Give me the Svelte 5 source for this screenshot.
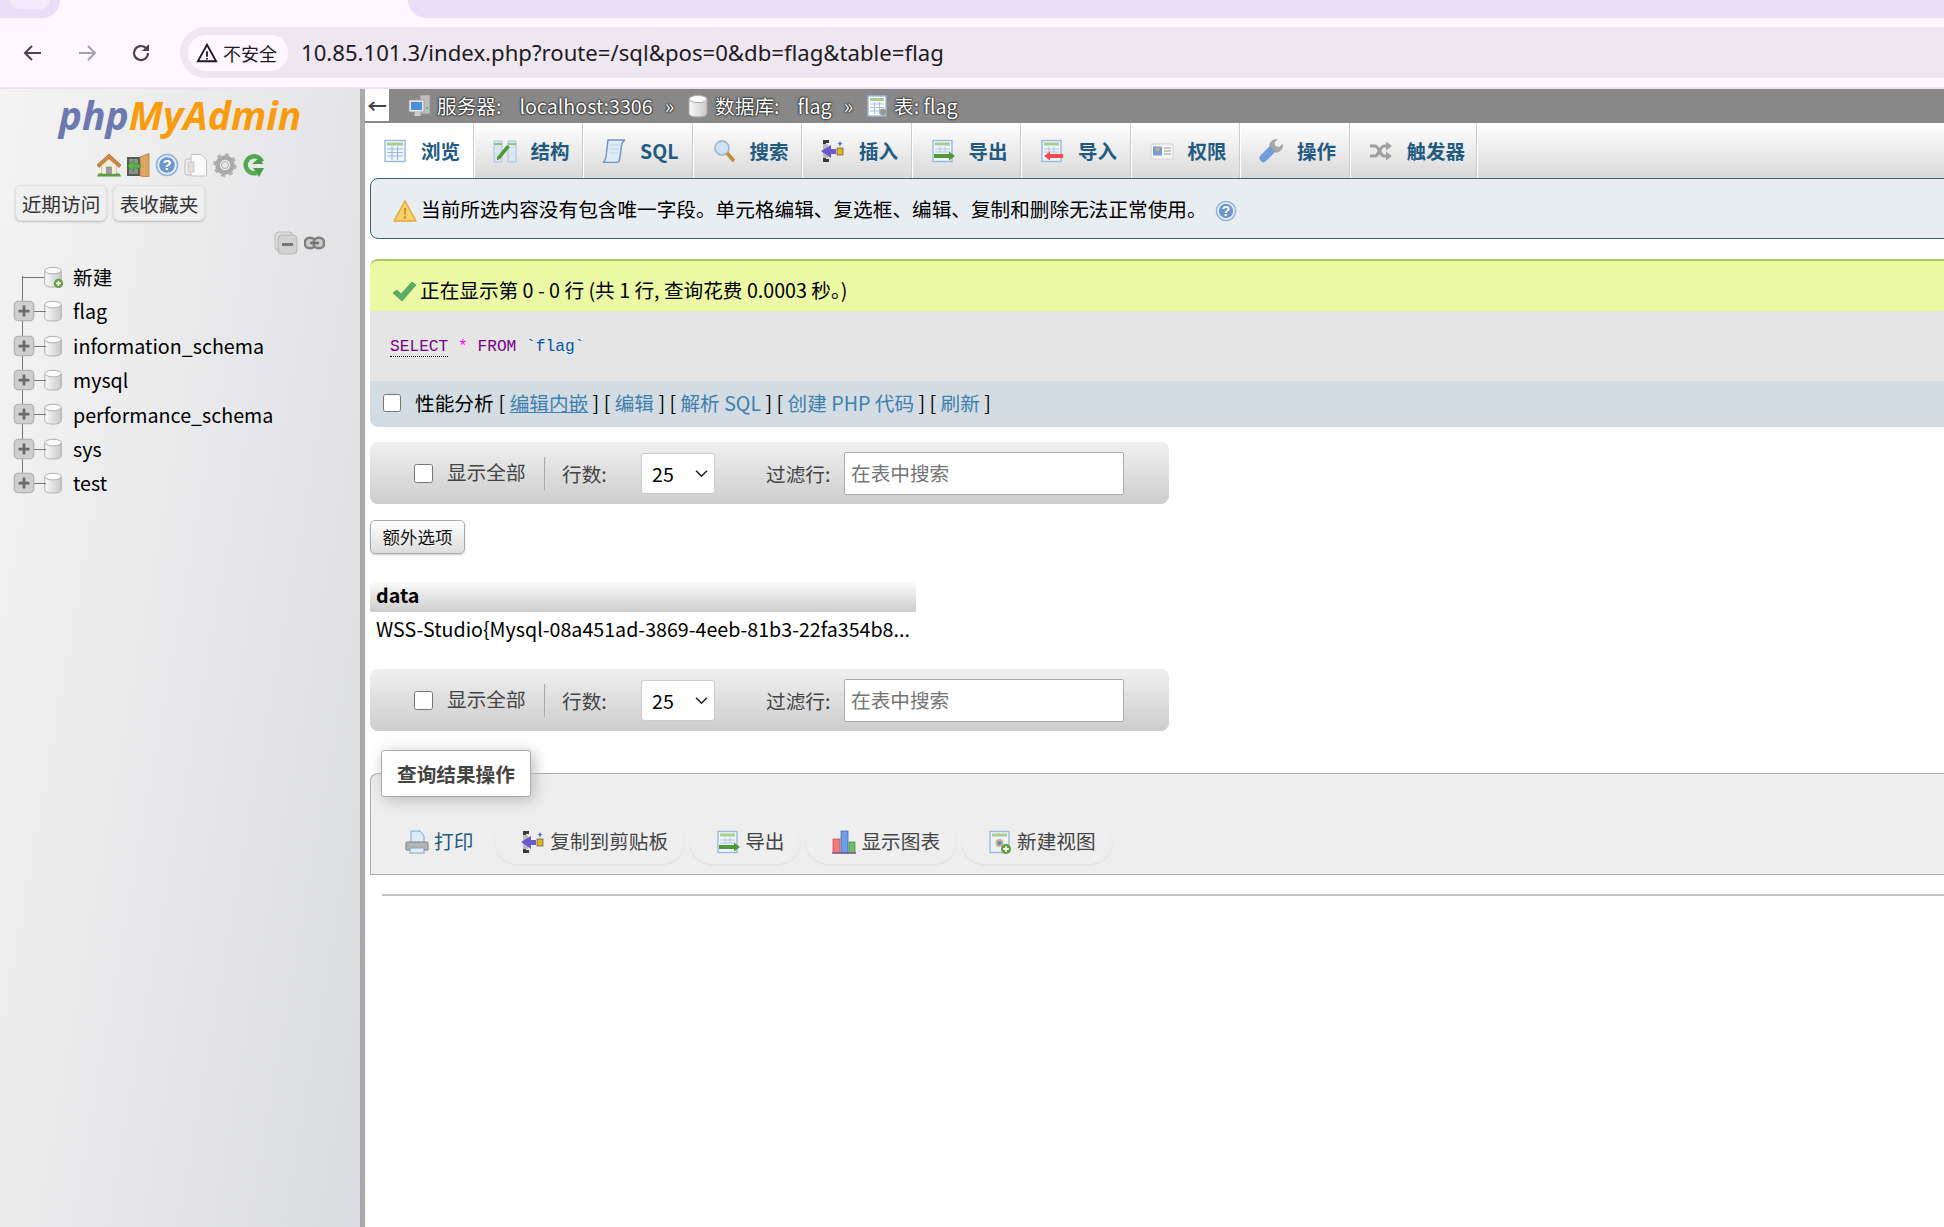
<script>
	const tabs = [
		{ label: '浏览', icon: 'browse', active: true },
		{ label: '结构', icon: 'structure' },
		{ label: 'SQL', icon: 'sql' },
		{ label: '搜索', icon: 'search' },
		{ label: '插入', icon: 'insert' },
		{ label: '导出', icon: 'export' },
		{ label: '导入', icon: 'import' },
		{ label: '权限', icon: 'privs' },
		{ label: '操作', icon: 'wrench' },
		{ label: '触发器', icon: 'triggers' }
	];

	const databases = ['flag', 'information_schema', 'mysql', 'performance_schema', 'sys', 'test'];

	const actions = [
		{ label: '复制到剪贴板', icon: 'insert' },
		{ label: '导出', icon: 'export' },
		{ label: '显示图表', icon: 'chart' },
		{ label: '新建视图', icon: 'view' }
	];
</script>

{#snippet icon(name)}
	<svg class="ic" viewBox="0 0 24 24" aria-hidden="true">
		{#if name === 'home'}
			<path d="M12 1 0 12l2 2.500 10-9 10 9 2-2.500z" fill="#d2873c" stroke="#8a5a2a" stroke-width=".6" />
			<path d="M4.500 12.500 12 6l7.500 6.500V21h-15z" fill="#f5ecd9" stroke="#b9a98c" stroke-width=".6" />
			<rect x="9.500" y="14" width="5" height="7" fill="#9a9a9a" stroke="#777" stroke-width=".5" />
			<path d="M0 23.500c1-3.500 3-4 6-2.500h12c3-1.500 5-1 6 2.500z" fill="#5d9c3c" />
		{:else if name === 'exit'}
			<rect x="1" y="4" width="13" height="19" fill="#565b54" />
			<rect x="3" y="6" width="9" height="15" fill="#8d938a" />
			<path d="M14 4 23 .5V24l-9-1z" fill="#dba662" stroke="#a8722f" stroke-width=".7" />
			<path d="M1 13l7-5.500V11h6v4H8v3.500z" fill="#58b546" stroke="#2f7a26" stroke-width=".6" />
		{:else if name === 'help'}
			<circle cx="12" cy="12" r="10.500" fill="#e3ecf7" stroke="#8fb0d9" stroke-width="1.500" />
			<circle cx="12" cy="12" r="7.800" fill="#6c96cd" />
			<text x="12" y="17" class="q">?</text>
		{:else if name === 'docs'}
			<rect x="1" y="6" width="13" height="16" rx="2" fill="#eee" stroke="#bbb" />
			<path d="M7 1.500h10l5.500 5.500v16H7z" fill="#fafafa" stroke="#c4c4c4" />
			<rect x="4" y="9" width="6" height="10" fill="#ddd" stroke="#bbb" stroke-width=".6" />
		{:else if name === 'gear'}
			<circle cx="12" cy="12" r="7.500" fill="none" stroke="#a9a9a9" stroke-width="4.500" />
			<circle cx="12" cy="12" r="10" fill="none" stroke="#b0b0b0" stroke-width="3.500" stroke-dasharray="3.800 4" />
			<circle cx="12" cy="12" r="3.500" fill="#e9e9e9" stroke="#999" stroke-width=".7" />
		{:else if name === 'reload'}
			<path d="M20 8.500A8.500 8.500 0 1 0 14.500 20" fill="none" stroke="#55a850" stroke-width="4.500" />
			<circle cx="11.500" cy="12" r="2.500" fill="#d9eed7" />
			<path d="M10 11h11l-3-7zM11 15l6 9 5-9z" fill="#4a9e46" />
		{:else if name === 'db' || name === 'dbnew'}
			<path d="M3 5v14c0 3 4 4 9 4s9-1 9-4V5z" fill="url(#dbg)" stroke="#a9a9a9" />
			<ellipse cx="12" cy="5" rx="9" ry="3.600" fill="#fbfbfb" stroke="#a9a9a9" />
			{#if name === 'dbnew'}
				<circle cx="18" cy="19" r="5" fill="#5f9e3f" />
				<path d="M18 16.200v5.600M15.200 19h5.600" stroke="#fff" stroke-width="1.800" />
			{/if}
		{:else if name === 'plus'}
			<rect x="1.500" y="1.500" width="21" height="21" rx="4" fill="#cfcfcf" stroke="#b4b4b4" stroke-width="1.500" />
			<path d="M12 6v12M6 12h12" stroke="#6b6b6b" stroke-width="3" />
		{:else if name === 'collapse'}
			<rect x="1" y="1" width="18" height="19" rx="4" fill="#dedede" stroke="#bbb" />
			<rect x="4" y="4" width="19" height="19" rx="4" fill="#d2d2d2" stroke="#b4b4b4" />
			<rect x="8" y="12" width="11" height="3" fill="#777" />
		{:else if name === 'link'}
			<rect x="1" y="6" width="12" height="12" rx="5.500" fill="#ccc" stroke="#808080" stroke-width="3" />
			<rect x="11" y="6" width="12" height="12" rx="5.500" fill="#ccc" stroke="#808080" stroke-width="3" />
			<rect x="7" y="10.500" width="10" height="3" fill="#707070" />
		{:else if name === 'server'}
			<rect x="12" y="1" width="10" height="19" fill="#bdbdbd" stroke="#8d8d8d" stroke-width=".7" />
			<rect x="1" y="6" width="15" height="12" fill="#e7e7e7" stroke="#999" stroke-width=".8" />
			<rect x="3" y="8" width="11" height="8" fill="#4b8fd6" />
			<path d="M6 22h7l-1-4H7z" fill="#ccc" />
			<circle cx="19" cy="14" r="1" fill="#4caf50" />
		{:else if name === 'table'}
			<rect x="3" y="2" width="18" height="20" fill="#fff" stroke="#9db8dd" stroke-width="1.400" />
			<rect x="5" y="4" width="14" height="3" fill="#a5cf8f" />
			<path d="M5 10h14M5 13.500h14M5 17h14M9.500 8v12M14.500 8v12" stroke="#a9c0e2" stroke-width="1.200" />
			<circle cx="18" cy="18" r="3.500" fill="#9a9a9a" />
		{:else if name === 'browse'}
			<rect x="2" y="1.500" width="20" height="21" fill="#f3f7fd" stroke="#9db8dd" stroke-width="1.400" />
			<rect x="4" y="3.500" width="16" height="3" fill="#a5cf8f" />
			<path d="M4 10h16M4 13.500h16M4 17h16M9 7.500V21M14.500 7.500V21" stroke="#9db8dd" stroke-width="1.200" />
		{:else if name === 'structure'}
			<path d="M1 2h8v21H1zM15 2h8v21h-8z" fill="#dbe6f5" stroke="#a9c0e2" />
			<path d="M1 5h8M15 5h8" stroke="#8fc07a" stroke-width="2" />
			<path d="M4 21l3-1 10-12-3-2-10 12z" fill="#4f9a35" />
		{:else if name === 'sql'}
			<path d="M6 1h17c-2 1-3 3-3.500 6l-2 14c-.3 2-2 2.500-3 2.500H1c2-1 2.500-3 3-6z" fill="#dfeafa" stroke="#6f96c9" stroke-width="1.500" />
			<path d="M8 6h10M7.500 10h9.500M7 14h9" stroke="#bcd0ea" />
		{:else if name === 'search'}
			<circle cx="10" cy="9" r="7" fill="#cfe2f5" stroke="#a9b8c7" stroke-width="1.800" />
			<path d="M15 14l7 8" stroke="#c08b3d" stroke-width="3.500" />
		{:else if name === 'insert'}
			<path d="M2 1h6v3H5v16h3v3H2z" fill="#3a3a3a" />
			<rect x="2" y="5" width="5" height="14" fill="#bdbdbd" />
			<path d="M0 12l10-6v4h5v5h-5v4z" fill="#6a5acd" />
			<rect x="16" y="9" width="6" height="7" fill="#e3b21c" stroke="#444" stroke-width=".6" />
			<path d="M19 2l1 2 1.500.5-1.500 1-1 2-1-2-1.500-1L18 4z" fill="#5b6fd0" />
		{:else if name === 'export' || name === 'import'}
			<rect x="2" y="1.500" width="19" height="21" fill="#f0f5fb" stroke="#9db8dd" stroke-width="1.400" />
			<rect x="4" y="3.500" width="15" height="3" fill="#a5cf8f" />
			<path d="M4 10h15M4 13h15M9 7.500v6M14 7.500v6" stroke="#b0c5e3" />
			{#if name === 'export'}
				<path d="M3 15h15v-2.500l6 4.500-6 4.500V19H3z" fill="#4f9a35" />
			{:else}
				<path d="M23 15H10v-2.500l-6 4.500 6 4.500V19h13z" fill="#ef4b4b" />
			{/if}
		{:else if name === 'privs'}
			<rect x="1" y="5" width="22" height="15" rx="1" fill="#f7f7f7" stroke="#d2d2d2" />
			<rect x="3" y="7.500" width="9" height="9" fill="#6d9ed6" />
			<circle cx="7.500" cy="10.500" r="2" fill="#e3a96c" />
			<path d="M14 9h7M14 12h7M14 15h7" stroke="#bbb" stroke-width="1.300" />
		{:else if name === 'wrench'}
			<path d="M2.500 22c-2.500-2-1.500-4.500-.5-5.500l10-10 5 5-10 10c-1 1-3 2.500-4.500.5z" fill="#6f9de0" stroke="#4f7cc4" stroke-width=".7" />
			<path d="M11 8c-1-4 2-7.500 7-7.500l-3 3 1 4 4 1 3.500-3c0 5-3.500 8.500-7.500 7.500z" fill="#a8a8a8" stroke="#888" stroke-width=".6" />
		{:else if name === 'triggers'}
			<path d="M1 7h5c4 0 5 10 9 10h3M1 17h5c4 0 5-10 9-10h3" fill="none" stroke="#a0a0a0" stroke-width="3.200" />
			<path d="M17 2.500l6 4.500-6 4.500zM17 12.500l6 4.500-6 4.500z" fill="#a0a0a0" />
		{:else if name === 'warn'}
			<path d="M12 2 1 22h22z" fill="#f7d26a" stroke="#e0a93b" stroke-width="1.500" stroke-linejoin="round" />
			<path d="M11 9h2l-.4 7h-1.200z" fill="#c98a1c" />
			<circle cx="12" cy="18.500" r="1.300" fill="#c98a1c" />
		{:else if name === 'ok'}
			<path d="M1 14l4-3 4 4L20 3l4 3L10 22z" fill="#59ad65" stroke="#3f8a4b" stroke-width=".6" />
		{:else if name === 'print'}
			<path d="M6 1h9l4 5v8H6z" fill="#dfeafa" stroke="#7ea2d0" />
			<path d="M2 12h20c1 0 1 1 1 2v6H1v-6c0-1 0-2 1-2z" fill="#b5b5b5" stroke="#808080" />
			<rect x="5" y="18" width="14" height="5" fill="#e6eef9" stroke="#7ea2d0" />
		{:else if name === 'chart'}
			<rect x="1" y="9" width="7" height="14" fill="#ef7d7d" stroke="#d64545" stroke-width=".7" />
			<rect x="9" y="1" width="7" height="22" fill="#6d9ee6" stroke="#2f62bb" stroke-width=".7" />
			<rect x="17" y="12" width="6" height="11" fill="#74bb6a" stroke="#3c8a35" stroke-width=".7" />
			<path d="M0 23h24" stroke="#7a4a90" stroke-width="1.300" />
		{:else if name === 'view'}
			<rect x="2" y="1.500" width="19" height="21" fill="#eef3fa" stroke="#9db8dd" stroke-width="1.400" />
			<rect x="4" y="3.500" width="15" height="3" fill="#a5cf8f" />
			<circle cx="11.500" cy="13" r="4" fill="#c9b38a" />
			<circle cx="11.500" cy="13" r="2" fill="#5a8cc9" />
			<circle cx="18" cy="19" r="5" fill="#5f9e3f" />
			<path d="M18 16.200v5.600M15.200 19h5.600" stroke="#fff" stroke-width="1.800" />
		{/if}
	</svg>
{/snippet}

{#snippet tableNav()}
	<div class="table-nav">
		<input type="checkbox" class="check" />
		<span class="show-all">显示全部</span>
		<span class="nav-sep"></span>
		<span class="rows-label">行数:</span>
		<span class="select-wrap">
			<select class="rows-select"><option>25</option><option>50</option></select>
			<svg class="chevron" viewBox="0 0 12 8"><path d="M1 1.500 6 6.500l5-5" fill="none" stroke="#222" stroke-width="1.500" /></svg>
		</span>
		<span class="filter-label">过滤行:</span>
		<input class="filter-input" type="text" placeholder="在表中搜索" />
	</div>
{/snippet}

<svg class="defs" width="0" height="0" aria-hidden="true">
	<defs>
		<linearGradient id="dbg" x1="0" x2="1" y1="0" y2="0">
			<stop offset="0" stop-color="#fafafa" />
			<stop offset="1" stop-color="#c8c8c8" />
		</linearGradient>
	</defs>
</svg>

<div class="browser">
	<div class="tabstrip">
		<div class="strip-left"><span class="other-tab"></span></div>
		<div class="strip-active"></div>
		<div class="strip-right"></div>
	</div>
	<div class="toolbar">
		<svg class="nav-btn" viewBox="0 0 24 24"><path d="M20 12H5M11 5l-7 7 7 7" fill="none" stroke="#48454e" stroke-width="2" /></svg>
		<svg class="nav-btn" viewBox="0 0 24 24"><path d="M4 12h15M13 5l7 7-7 7" fill="none" stroke="#a5a1aa" stroke-width="2" /></svg>
		<svg class="nav-btn" viewBox="0 0 24 24"><path d="M19 12a7 7 0 1 1-2.200-5.100L19 9" fill="none" stroke="#48454e" stroke-width="2.200" /><path d="M20 3v7h-7z" fill="#48454e" /></svg>
		<div class="address">
			<div class="security">
				<svg class="warn-tri" viewBox="0 0 24 24"><path d="M12 3 2 21h20z M12 10v6 M12 17.500v1.500" fill="none" stroke="#1d1b20" stroke-width="2" /></svg>
				<span>不安全</span>
			</div>
			<span class="url">10.85.101.3/index.php?route=/sql&amp;pos=0&amp;db=flag&amp;table=flag</span>
		</div>
	</div>
</div>

<div class="page">
	<aside class="sidebar">
		<div class="logo"><span class="php">php</span><span class="mya">MyAdmin</span></div>
		<div class="quick-icons">
			{@render icon('home')}
			{@render icon('exit')}
			{@render icon('help')}
			{@render icon('docs')}
			{@render icon('gear')}
			{@render icon('reload')}
		</div>
		<div class="side-tabs">
			<button type="button">近期访问</button>
			<button type="button">表收藏夹</button>
		</div>
		<div class="tree-tools">
			{@render icon('collapse')}
			{@render icon('link')}
		</div>
		<ul class="tree">
			<li class="new-row">
				<span class="exp"></span>
				{@render icon('dbnew')}
				<span>新建</span>
			</li>
			{#each databases as db}
				<li>
					<span class="exp">{@render icon('plus')}</span>
					{@render icon('db')}
					<span>{db}</span>
				</li>
			{/each}
		</ul>
	</aside>
	<div class="splitter"></div>
	<main class="main">
		<div class="crumbs">
			<span class="back">←</span>
			<span class="crumb first">{@render icon('server')}<span>服务器:</span><span class="val">localhost:3306</span></span>
			<span class="raquo">»</span>
			<span class="crumb">{@render icon('db')}<span>数据库:</span><span class="val">flag</span></span>
			<span class="raquo">»</span>
			<span class="crumb">{@render icon('table')}<span>表: flag</span></span>
		</div>
		<nav class="tabs">
			{#each tabs as tab}
				<a class="tab" class:active={tab.active} href="#top">
					{@render icon(tab.icon)}
					<span>{tab.label}</span>
				</a>
			{/each}
		</nav>
		<div class="content">
			<div class="notice">
				{@render icon('warn')}
				<span>当前所选内容没有包含唯一字段。单元格编辑、复选框、编辑、复制和删除无法正常使用。</span>
				{@render icon('help')}
			</div>
			<div class="result-block">
				<div class="success">
					{@render icon('ok')}
					<span>正在显示第 0 - 0 行 (共 1 行, 查询花费 0.0003 秒。)</span>
				</div>
				<div class="sql-box">
					<code><span class="kw dotted">SELECT</span> <span class="star">*</span> <span class="kw">FROM</span> <span class="name">`flag`</span></code>
				</div>
				<div class="profiling">
					<input type="checkbox" class="check" />
					<span class="prof-label">性能分析</span>
					<span>[ <a class="under" href="#top">编辑内嵌</a> ] [ <a href="#top">编辑</a> ] [ <a href="#top">解析 SQL</a> ] [ <a href="#top">创建 PHP 代码</a> ] [ <a href="#top">刷新</a> ]</span>
				</div>
			</div>

			{@render tableNav()}

			<button class="extra" type="button">额外选项</button>

			<table class="data">
				<thead><tr><th>data</th></tr></thead>
				<tbody><tr><td>WSS-Studio{'{'}Mysql-08a451ad-3869-4eeb-81b3-22fa354b8...</td></tr></tbody>
			</table>

			{@render tableNav()}

			<fieldset class="ops">
				<legend>查询结果操作</legend>
				<div class="ops-row">
					<a class="op plain" href="#top">{@render icon('print')}<span>打印</span></a>
					{#each actions as a}
						<a class="op" href="#top">{@render icon(a.icon)}<span>{a.label}</span></a>
					{/each}
				</div>
			</fieldset>
			<hr class="rule" />
		</div>
	</main>
</div>

<style>
	:global(body) {
		margin: 0;
		background: #fff;
		font-family: 'Noto Sans CJK SC', 'Noto Sans', sans-serif;
		font-size: 19.65px;
		color: #000;
		overflow: hidden;
	}

	.defs {
		position: absolute;
	}

	.ic {
		width: 24px;
		height: 24px;
		flex: none;
		display: block;
	}

	.q {
		fill: #fff;
		font: bold 15px 'Liberation Sans', sans-serif;
		text-anchor: middle;
	}

	/* browser chrome */
	.browser {
		height: 89px;
		box-sizing: border-box;
		border-bottom: 2px solid #eee2f2;
		background: #fef7ff;
	}

	.tabstrip {
		display: flex;
		height: 18px;
		background: #fef7ff;
	}

	.strip-left {
		width: 60px;
		background: #eaddf7;
		border-radius: 0 0 18px 0;
	}

	.other-tab {
		display: block;
		width: 40px;
		height: 9px;
		margin-left: 10px;
		background: #f3eafa;
		border-radius: 0 0 12px 12px;
	}

	.strip-active {
		width: 348px;
	}

	.strip-right {
		flex: 1;
		background: #eaddf7;
		border-radius: 0 0 0 18px;
	}

	.toolbar {
		display: flex;
		align-items: center;
		height: 69px;
		padding-left: 21px;
		box-sizing: border-box;
		gap: 30px;
	}

	.nav-btn {
		width: 24px;
		height: 24px;
		flex: none;
	}

	.address {
		flex: 1;
		display: flex;
		align-items: center;
		height: 51px;
		margin-left: -3px;
		padding-left: 8px;
		background: #eee6f1;
		border-radius: 26px 0 0 26px;
	}

	.security {
		display: flex;
		align-items: center;
		gap: 5px;
		height: 36px;
		padding: 0 11px 0 8px;
		background: #fef7ff;
		border-radius: 18px;
		font-size: 18px;
		color: #1d1b20;
	}

	.warn-tri {
		width: 22px;
		height: 22px;
	}

	.url {
		margin-left: 13px;
		padding-bottom: 2px;
		font: 22.15px 'Noto Sans', sans-serif;
		color: #1d1b20;
	}

	/* phpmyadmin frame */
	.page {
		display: flex;
		height: 1138px;
	}

	.sidebar {
		width: 360px;
		flex: none;
		box-sizing: border-box;
		background: linear-gradient(100deg, #f4f4f4, #dbdcdf);
	}

	.logo {
		text-align: center;
		padding-top: 1px;
		height: 57px;
		box-sizing: border-box;
		font: italic bold 39px/50px 'Open Sans', sans-serif;
	}

	.php {
		color: #6c78af;
	}

	.mya {
		color: #f89c0e;
	}

	.quick-icons {
		display: flex;
		gap: 5px;
		padding-left: 97px;
		height: 37px;
		align-items: center;
	}

	.side-tabs {
		display: flex;
		gap: 6px;
		margin-top: 2px;
		padding-left: 15px;
	}

	.side-tabs button {
		height: 36px;
		width: 92px;
		padding: 0;
		font: inherit;
		color: #333;
		background: #efefef;
		border: 1px solid #e2e2e2;
		border-radius: 6px;
		box-shadow: 0 1px 2px #bbb;
	}

	.tree-tools {
		display: flex;
		align-items: center;
		gap: 6px;
		padding: 10px 0 0 274px;
		height: 24px;
	}

	.tree-tools .ic:last-child {
		width: 21px;
	}

	.tree {
		position: relative;
		list-style: none;
		margin: 0;
		padding: 4.6px 0 0 13px;
	}

	/* tree trunk, runs behind the expanders */
	.tree::before {
		content: '';
		position: absolute;
		left: 22px;
		top: 21px;
		height: 200px;
		border-left: 1.5px solid #777;
	}

	.tree li {
		position: relative;
		display: flex;
		align-items: center;
		height: 34.4px;
		line-height: 1;
	}

	.tree li .ic {
		width: 22px;
		height: 22px;
	}

	.tree li::before {
		content: '';
		position: absolute;
		left: 17px;
		width: 16px;
		top: 50%;
		border-top: 1.5px solid #777;
	}

	.new-row::before {
		left: 9px !important;
		width: 22px !important;
	}

	.exp {
		position: relative;
		z-index: 1;
		width: 29px;
		flex: none;
	}

	.tree li > span:last-child {
		margin-left: 9px;
	}

	.splitter {
		width: 5px;
		flex: none;
		background: #aaa;
	}

	.main {
		flex: 1;
		min-width: 0;
		overflow: hidden;
	}

	.crumbs {
		display: flex;
		align-items: center;
		height: 34px;
		box-sizing: border-box;
		padding-bottom: 1px;
		background: #888;
		color: #fff;
		text-shadow: 0 0 2px #000, 0 0 2px #000;
		white-space: nowrap;
	}

	.back {
		width: 24px;
		height: 32px;
		margin-bottom: 1px;
		background: #fff;
		color: #444;
		text-shadow: none;
		text-align: center;
		font-weight: 700;
		line-height: 34px;
	}

	.crumb {
		display: flex;
		align-items: center;
		gap: 5px;
	}

	.crumb.first {
		margin-left: 19px;
	}

	.val {
		margin-left: 13px;
	}

	.raquo {
		margin: 0 12px;
	}

	.tabs {
		display: flex;
		height: 55px;
		background: linear-gradient(#fff, #d9d9d9);
	}

	.tab {
		display: flex;
		align-items: center;
		gap: 14px;
		padding: 0 12px 0 18px;
		box-sizing: border-box;
		min-width: 109.5px;
		border-right: 1px solid #fff;
		box-shadow: inset -2px 0 0 -1px #ccc;
		font-weight: 700;
		font-size: 19.5px;
		color: #235a81;
		text-decoration: none;
	}

	.tab.active {
		background: #fff;
	}

	.content {
		box-sizing: border-box;
		width: calc(100% + 30px);
		padding-left: 5px;
	}

	.notice {
		display: flex;
		align-items: center;
		height: 61px;
		box-sizing: border-box;
		padding-left: 22px;
		gap: 4px;
		background: #e8edf1;
		border: 1.5px solid #36677f;
		border-radius: 8px;
	}

	.notice .ic {
		margin-top: 4px;
	}

	.notice .ic:last-child {
		width: 22px;
		height: 22px;
		margin-left: 4px;
	}

	.result-block {
		margin-top: 20px;
	}

	.success {
		display: flex;
		align-items: center;
		gap: 4px;
		height: 52px;
		box-sizing: border-box;
		padding: 7px 0 0 22px;
		background: #ebf8a4;
		border-top: 2px solid #a8c868;
		border-radius: 8px 8px 0 0;
	}

	.success .ic {
		margin-top: 3px;
	}

	.sql-box {
		display: flex;
		align-items: center;
		height: 70px;
		box-sizing: border-box;
		padding: 2px 0 0 20px;
		background: #e5e5e5;
	}

	.sql-box code {
		font: 16.2px 'Liberation Mono', monospace;
	}

	.kw {
		color: #770088;
	}

	.dotted {
		border-bottom: 1px dotted #000;
	}

	.star {
		color: #ff00ff;
	}

	.name {
		color: #0055aa;
	}

	.profiling {
		display: flex;
		align-items: center;
		height: 46px;
		box-sizing: border-box;
		padding: 0 0 3px 13px;
		background: #d3dce3;
		border-radius: 0 0 8px 8px;
	}

	.profiling a {
		color: #3f80ae;
		text-decoration: none;
	}

	.profiling a.under {
		text-decoration: underline;
	}

	.prof-label {
		margin: 0 5px 0 14px;
	}

	.profiling .check {
		width: 18px;
		height: 18px;
		margin-left: 0;
	}

	.check {
		width: 19px;
		height: 19px;
		margin: 0;
		flex: none;
	}

	.table-nav {
		display: flex;
		align-items: center;
		width: 799px;
		height: 62px;
		margin-top: 15px;
		padding-left: 44px;
		box-sizing: border-box;
		background: linear-gradient(#f0f0f0, #cdcdcd);
		border-radius: 8px;
		color: #444;
	}

	.show-all {
		margin: -3px 0 0 14px;
		width: 79px;
		white-space: nowrap;
	}

	.nav-sep {
		width: 1px;
		height: 33px;
		margin: 0 17px 0 18px;
		background: #aaa;
		box-shadow: 1px 0 0 #ddd;
	}

	.rows-label {
		width: 79px;
	}

	.select-wrap {
		position: relative;
		display: block;
		width: 74px;
		height: 41px;
	}

	.rows-select {
		appearance: none;
		width: 100%;
		height: 100%;
		font: inherit;
		color: #000;
		background: #fff;
		border: 1px solid #ccc;
		border-radius: 3px;
		padding-left: 10px;
	}

	.chevron {
		position: absolute;
		right: 7px;
		top: 16px;
		width: 13px;
		height: 9px;
		pointer-events: none;
	}

	.filter-label {
		margin-left: 51px;
		width: 78px;
		white-space: nowrap;
	}

	.filter-input {
		width: 280px;
		height: 43px;
		box-sizing: border-box;
		padding: 0 0 2px 6px;
		font: inherit;
		background: #fff;
		border: 1px solid #aaa;
		border-radius: 2px;
	}

	.filter-input::placeholder {
		color: #757575;
	}

	.extra {
		display: block;
		width: 95px;
		height: 34px;
		margin-top: 16px;
		padding: 0 0 2px;
		font: inherit;
		font-size: 17.5px;
		color: #111;
		background: linear-gradient(#fff, #ddd);
		border: 1px solid #aaa;
		border-radius: 5px;
		box-shadow: 0 1px 2px #ccc;
		text-shadow: 0 1px 0 #fff;
	}

	.data {
		width: 546px;
		margin-top: 26px;
		border-collapse: collapse;
	}

	.data th {
		height: 32px;
		padding: 0 6px 3px;
		box-sizing: border-box;
		text-align: left;
		font-weight: 700;
		background: linear-gradient(#fff, #ccc);
	}

	.data td {
		height: 33px;
		padding: 0 6px;
		white-space: nowrap;
	}

	.data + .table-nav {
		margin-top: 24px;
	}

	.ops {
		margin: 19px 0 0;
		padding: 0 0 10px 10px;
		background: #eee;
		border: 1px solid #aaa;
		border-right: 0;
		border-radius: 8px 0 0 0;
		min-width: 0;
	}

	.ops legend {
		height: 47px;
		box-sizing: border-box;
		padding: 0 15px;
		margin: 0;
		line-height: 46px;
		font-weight: 700;
		color: #444;
		background: #fff;
		border: 1px solid #aaa;
		border-radius: 3px;
		box-shadow: 3px 3px 15px #bbb;
	}

	.ops-row {
		display: flex;
		gap: 6px;
		padding-top: 23px;
	}

	.op {
		display: flex;
		align-items: center;
		gap: 5px;
		height: 44px;
		padding: 0 16px 0 26px;
		color: #444;
		text-decoration: none;
		border-radius: 22px;
		box-shadow: 0 1px 2px #ddd;
	}

	.op span {
		margin-top: -3px;
	}

	.op.plain {
		padding: 0 16px 0 24px;
		color: #235a81;
		box-shadow: none;
	}

	.rule {
		margin: 19px 0 0 12px;
		border: 0;
		border-top: 2px solid #c4c4c4;
	}
</style>
